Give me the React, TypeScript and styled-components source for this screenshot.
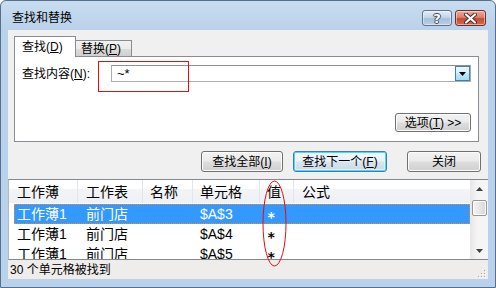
import * as React from "react";
import styled, { createGlobalStyle } from "styled-components";

const GlobalStyle = createGlobalStyle`
  html, body {
    margin: 0;
    padding: 0;
    background: #ffffff;
  }
  body {
    font-family: "Liberation Sans", "Noto Sans CJK SC", sans-serif;
    font-size: 12px;
    color: #000;
  }
`;

const FONT = `"Liberation Sans", "Noto Sans CJK SC", sans-serif`;

const Window = styled.div`
  position: relative;
  width: 496px;
  height: 288px;
  box-sizing: border-box;
  border: 1px solid #54708f;
  border-radius: 6px 6px 0 0;
  background: linear-gradient(to bottom, #c9dcf0 0px, #b9d1ea 30px, #b9d1ea 100%);
  display: flex;
  flex-direction: column;
  overflow: hidden;
  font-family: ${FONT};
`;

const TitleBar = styled.div`
  height: 29px;
  flex: none;
  display: flex;
  align-items: flex-start;
  padding: 0 9px 0 11px;
`;

const Title = styled.div`
  flex: 1;
  font-size: 12px;
  line-height: 16px;
  margin-top: 9px;
  color: #000;
`;

const CaptionButton = styled.div<{ $w: number; $red?: boolean }>`
  width: ${(p) => p.$w}px;
  height: 16px;
  margin-top: 9px;
  margin-left: 3px;
  box-sizing: border-box;
  border: 1px solid ${(p) => (p.$red ? "#6e2d26" : "#5e728c")};
  border-radius: 3px;
  background: ${(p) =>
    p.$red
      ? "linear-gradient(to bottom, #e9a99b 0%, #d9816f 45%, #c64a34 55%, #d46a52 100%)"
      : "linear-gradient(to bottom, #e3ecf6 0%, #c5d6e9 45%, #a7bfdc 55%, #b9cfe6 100%)"};
  box-shadow: inset 0 0 0 1px rgba(255, 255, 255, 0.45);
  display: flex;
  align-items: center;
  justify-content: center;
`;

const Frame = styled.div`
  flex: 1;
  display: flex;
  padding: 0 7px 8px 7px;
  min-height: 0;
`;

const Client = styled.div`
  flex: 1;
  display: flex;
  flex-direction: column;
  background: #f0f0f0;
  min-width: 0;
`;

const TabsWrap = styled.div`
  padding: 6px 9px 0 6px;
`;

const TabStrip = styled.div`
  height: 20px;
  display: flex;
  align-items: flex-end;
`;

const Tab = styled.div<{ $active?: boolean; $w: number }>`
  position: relative;
  z-index: ${(p) => (p.$active ? 2 : 1)};
  width: ${(p) => p.$w}px;
  height: ${(p) => (p.$active ? 21 : 16)}px;
  margin-bottom: ${(p) => (p.$active ? -1 : 0)}px;
  box-sizing: border-box;
  border: 1px solid #898c95;
  border-bottom: none;
  border-left: ${(p) => (p.$active ? "1px solid #898c95" : "none")};
  background: ${(p) =>
    p.$active ? "#ffffff" : "linear-gradient(to bottom, #f2f2f2 0%, #ebebeb 50%, #dddddd 51%, #cfcfcf 100%)"};
  padding-left: ${(p) => (p.$active ? 7 : 5)}px;
  display: flex;
  align-items: center;
  font-size: 12px;
  line-height: 14px;
`;

const Panel = styled.div`
  border: 1px solid #898c95;
  background: #ffffff;
  padding: 8px 7px 9px 7px;
  display: flex;
  flex-direction: column;
`;

const FieldRow = styled.div`
  display: flex;
  align-items: center;
  height: 17px;
`;

const Label = styled.div`
  width: 89px;
  flex: none;
  font-size: 12px;
  line-height: 14px;
  padding-top: 1px;
`;

const ComboBox = styled.div`
  flex: 1;
  height: 17px;
  box-sizing: border-box;
  border: 1px solid #abadb3;
  border-top-color: #8e9098;
  background: #fff;
  display: flex;
  align-items: center;
`;

const ComboText = styled.div`
  flex: 1;
  padding-left: 5px;
  font-size: 13px;
  line-height: 15px;
`;

const ComboArrow = styled.div`
  width: 15px;
  height: 15px;
  box-sizing: border-box;
  border: 1px solid #3c7fb1;
  background: linear-gradient(to bottom, #eaf6fd 0%, #d9f0fc 45%, #bee6fd 55%, #a7d9f5 100%);
  display: flex;
  align-items: center;
  justify-content: center;
`;

const OptionsRow = styled.div`
  display: flex;
  justify-content: flex-end;
  margin-top: 31px;
`;

const Button = styled.div<{ $w: number; $h?: number; $default?: boolean; $ml?: number }>`
  width: ${(p) => p.$w}px;
  height: ${(p) => p.$h ?? 21}px;
  margin-left: ${(p) => p.$ml ?? 0}px;
  box-sizing: border-box;
  border: 1px solid ${(p) => (p.$default ? "#3c7fb1" : "#707070")};
  border-radius: 3px;
  background: ${(p) =>
    p.$default
      ? "linear-gradient(to bottom, #f3f9fd 0%, #e8f2f9 45%, #d9e5ee 55%, #cdd9e2 100%)"
      : "linear-gradient(to bottom, #f2f2f2 0%, #ebebeb 45%, #dddddd 55%, #cfcfcf 100%)"};
  box-shadow: ${(p) =>
    p.$default ? "inset 0 0 0 1px #48d8fb, inset 0 0 0 2px #ffffff80" : "inset 0 0 0 1px #fcfcfc"};
  display: flex;
  align-items: center;
  justify-content: center;
  font-size: 12px;
  line-height: 14px;
  white-space: nowrap;
`;

const ButtonRow = styled.div`
  display: flex;
  justify-content: flex-end;
  padding-right: 7px;
  margin-top: 9px;
`;

const List = styled.div`
  margin-top: 7px;
  height: 81px;
  box-sizing: border-box;
  border: 1px solid #828790;
  border-left-color: #b5b8bf;
  border-right: none;
  background: #fff;
  display: flex;
`;

const ListBody = styled.div`
  flex: 1;
  display: flex;
  flex-direction: column;
  overflow: hidden;
  min-width: 0;
`;

const COLS = "69px 65px 50px 67px 34px 1fr";

const Header = styled.div`
  height: 23px;
  flex: none;
  display: grid;
  grid-template-columns: ${COLS};
  background: linear-gradient(to bottom, #ffffff 0%, #ffffff 40%, #f3f4f6 41%, #eef0f3 100%);
`;

const HeadCell = styled.div<{ $pad: number }>`
  padding-left: ${(p) => p.$pad}px;
  border-right: 1px solid #e3e5e9;
  display: flex;
  align-items: center;
  font-size: 14px;
  line-height: 16px;
  &:last-child {
    border-right: none;
  }
`;

const Rows = styled.div`
  padding-top: 1px;
`;

const ROW_COLS = "64px 65px 50px 67px 34px 1fr";

const Row = styled.div<{ $selected?: boolean }>`
  height: 20px;
  margin-left: 5px;
  display: grid;
  grid-template-columns: ${ROW_COLS};
  box-sizing: border-box;
  background: ${(p) => (p.$selected ? "#3399ff" : "transparent")};
  color: ${(p) => (p.$selected ? "#ffffff" : "#000000")};
  outline: ${(p) => (p.$selected ? "1px dotted #e5893a" : "none")};
  outline-offset: -1px;
  font-size: 14px;
  line-height: 16px;
`;

const Cell = styled.div<{ $pad: number }>`
  padding-left: ${(p) => p.$pad}px;
  display: flex;
  align-items: center;
  white-space: nowrap;
`;

const Star = styled.span`
  font-family: "DejaVu Sans Mono", monospace;
  font-weight: bold;
  font-size: 14px;
  line-height: 14px;
  padding-top: 5px;
`;

const ScrollBar = styled.div`
  width: 17px;
  flex: none;
  background: linear-gradient(to right, #e8e8e8, #f5f5f5 40%, #f5f5f5);
  border-left: 1px solid #e8e8e8;
  display: flex;
  flex-direction: column;
  align-items: center;
`;

const ArrowBox = styled.div`
  width: 16px;
  height: 17px;
  display: flex;
  align-items: center;
  justify-content: center;
`;

const Thumb = styled.div`
  width: 15px;
  height: 16px;
  margin-top: 3px;
  box-sizing: border-box;
  border: 1px solid #979797;
  border-radius: 2px;
  background: linear-gradient(to right, #f4f4f4 0%, #e6e6e6 50%, #d8d8d8 100%);
  box-shadow: inset 0 0 0 1px #fafafa;
`;

const ScrollSpacer = styled.div`
  flex: 1;
`;

const StatusBar = styled.div`
  flex: 1;
  background: #efedeb;
  display: flex;
  align-items: center;
  justify-content: space-between;
  padding-left: 2px;
  font-size: 12px;
  line-height: 14px;
`;

const Grip = styled.div`
  align-self: flex-end;
  margin: 0 2px 1px 0;
  display: flex;
`;

const RedBox = styled.div`
  position: absolute;
  left: 97px;
  top: 60px;
  width: 91px;
  height: 31px;
  box-sizing: border-box;
  border: 1px solid #e01010;
  pointer-events: none;
`;

const RedOval = styled.svg`
  position: absolute;
  left: 261px;
  top: 179px;
  pointer-events: none;
`;

const Glyph = styled.span`
  color: #fff;
  font-weight: bold;
  font-size: 13px;
  line-height: 13px;
  font-family: "DejaVu Sans", sans-serif;
  text-shadow: 1px 0 0 #3a4a5e, -1px 0 0 #3a4a5e, 0 1px 0 #3a4a5e, 0 -1px 0 #3a4a5e;
`;

const Key = ({ k }: { k: string }) => (
  <>
    (<u>{k}</u>)
  </>
);

const rows = [
  { book: "工作薄1", sheet: "前门店", cell: "$A$3", value: "*", selected: true },
  { book: "工作薄1", sheet: "前门店", cell: "$A$4", value: "*" },
  { book: "工作薄1", sheet: "前门店", cell: "$A$5", value: "*" },
];

export default function App() {
  return (
    <>
      <GlobalStyle />
      <Window>
        <TitleBar>
          <Title>查找和替换</Title>
          <CaptionButton $w={30}>
            <Glyph>?</Glyph>
          </CaptionButton>
          <CaptionButton $w={31} $red>
            <svg width="13" height="11" viewBox="0 0 13 11">
              <path
                d="M2 1.5 L11 9.5 M11 1.5 L2 9.5"
                stroke="#4a2a26"
                strokeWidth="4"
                strokeLinecap="round"
              />
              <path
                d="M2 1.5 L11 9.5 M11 1.5 L2 9.5"
                stroke="#ffffff"
                strokeWidth="2.2"
                strokeLinecap="round"
              />
            </svg>
          </CaptionButton>
        </TitleBar>
        <Frame>
          <Client>
            <TabsWrap>
              <TabStrip>
                <Tab $active $w={62}>
                  查找<Key k="D" />
                </Tab>
                <Tab $w={56}>
                  替换<Key k="P" />
                </Tab>
              </TabStrip>
              <Panel>
                <FieldRow>
                  <Label>
                    查找内容<Key k="N" />:
                  </Label>
                  <ComboBox>
                    <ComboText>~*</ComboText>
                    <ComboArrow>
                      <svg width="7" height="4" viewBox="0 0 7 4">
                        <path d="M0 0 H7 L3.5 4 Z" fill="#000" />
                      </svg>
                    </ComboArrow>
                  </ComboBox>
                </FieldRow>
                <OptionsRow>
                  <Button $w={76} $h={19}>
                    选项<Key k="T" />&nbsp;&gt;&gt;
                  </Button>
                </OptionsRow>
              </Panel>
            </TabsWrap>
            <ButtonRow>
              <Button $w={82}>
                查找全部<Key k="I" />
              </Button>
              <Button $w={94} $ml={10} $default>
                查找下一个<Key k="F" />
              </Button>
              <Button $w={74} $ml={20}>
                关闭
              </Button>
            </ButtonRow>
            <List>
              <ListBody>
                <Header>
                  <HeadCell $pad={8}>工作薄</HeadCell>
                  <HeadCell $pad={8}>工作表</HeadCell>
                  <HeadCell $pad={7}>名称</HeadCell>
                  <HeadCell $pad={7}>单元格</HeadCell>
                  <HeadCell $pad={7}>值</HeadCell>
                  <HeadCell $pad={8}>公式</HeadCell>
                </Header>
                <Rows>
                  {rows.map((r, i) => (
                    <Row key={i} $selected={r.selected}>
                      <Cell $pad={3}>{r.book}</Cell>
                      <Cell $pad={8}>{r.sheet}</Cell>
                      <Cell $pad={7}></Cell>
                      <Cell $pad={7}>{r.cell}</Cell>
                      <Cell $pad={7}>
                        <Star>{r.value}</Star>
                      </Cell>
                      <Cell $pad={8}></Cell>
                    </Row>
                  ))}
                </Rows>
              </ListBody>
              <ScrollBar>
                <ArrowBox>
                  <svg width="7" height="4" viewBox="0 0 7 4">
                    <path d="M3.5 0 L7 4 H0 Z" fill="#404040" />
                  </svg>
                </ArrowBox>
                <Thumb />
                <ScrollSpacer />
                <ArrowBox>
                  <svg width="7" height="4" viewBox="0 0 7 4">
                    <path d="M0 0 H7 L3.5 4 Z" fill="#404040" />
                  </svg>
                </ArrowBox>
              </ScrollBar>
            </List>
            <StatusBar>
              <span>30 个单元格被找到</span>
              <Grip>
                <svg width="9" height="9" viewBox="0 0 9 9">
                  {[
                    [7, 1],
                    [4, 4],
                    [7, 4],
                    [1, 7],
                    [4, 7],
                    [7, 7],
                  ].map(([x, y], i) => (
                    <g key={i}>
                      <rect x={x + 1} y={y + 1} width="1" height="1" fill="#ffffff" />
                      <rect x={x} y={y} width="1" height="1" fill="#a8a8a8" />
                    </g>
                  ))}
                </svg>
              </Grip>
            </StatusBar>
          </Client>
        </Frame>
        <RedBox />
        <RedOval width="26" height="88" viewBox="0 0 26 88">
          <ellipse cx="12.5" cy="43.5" rx="11.5" ry="42.5" fill="none" stroke="#e01010" strokeWidth="1" />
        </RedOval>
      </Window>
    </>
  );
}
